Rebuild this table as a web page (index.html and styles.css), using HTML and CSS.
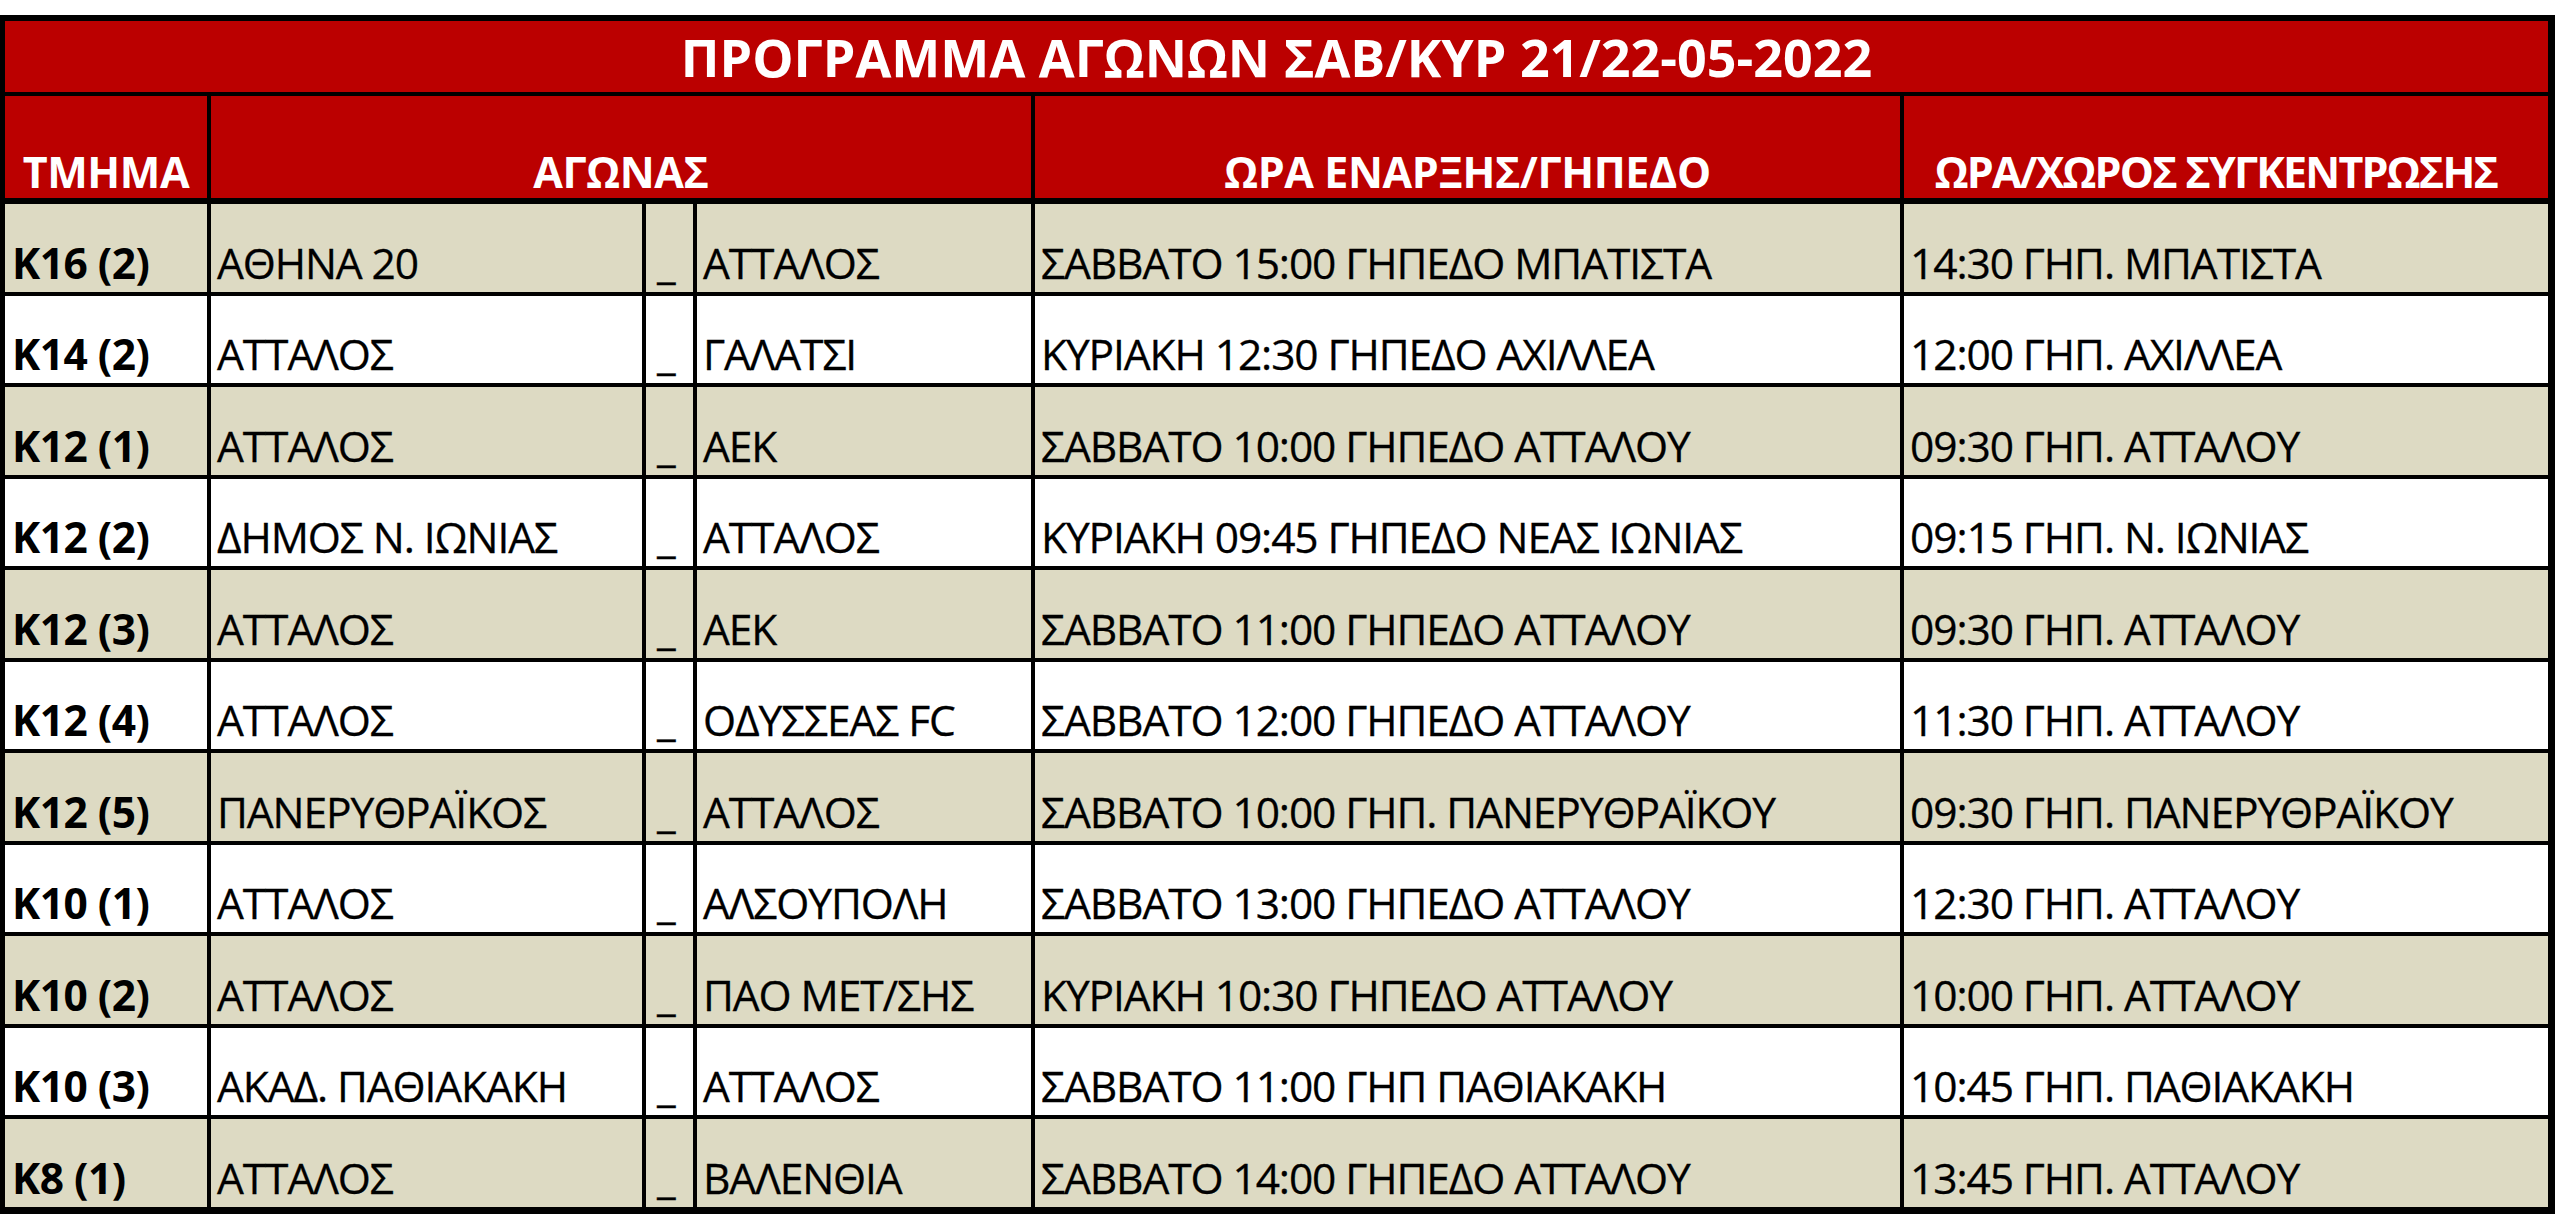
FILE: index.html
```html
<!DOCTYPE html>
<html lang="el">
<head>
<meta charset="utf-8">
<title>ΠΡΟΓΡΑΜΜΑ ΑΓΩΝΩΝ</title>
<link rel="stylesheet" href="styles.css">
</head>
<body>
<div class="sheet">
  <div class="c title">ΠΡΟΓΡΑΜΜΑ ΑΓΩΝΩΝ ΣΑΒ/ΚΥΡ 21/22-05-2022</div>

  <div class="c head">ΤΜΗΜΑ</div>
  <div class="c head span3">ΑΓΩΝΑΣ</div>
  <div class="c head">ΩΡΑ ΕΝΑΡΞΗΣ/ΓΗΠΕΔΟ</div>
  <div class="c head last tight">ΩΡΑ/ΧΩΡΟΣ ΣΥΓΚΕΝΤΡΩΣΗΣ</div>

  <div class="row tan"><div class="c grp">Κ16 (2)</div><div class="c">ΑΘΗΝΑ 20</div><div class="c sep">_</div><div class="c">ΑΤΤΑΛΟΣ</div><div class="c">ΣΑΒΒΑΤΟ 15:00 ΓΗΠΕΔΟ ΜΠΑΤΙΣΤΑ</div><div class="c last">14:30 ΓΗΠ. ΜΠΑΤΙΣΤΑ</div></div>
  <div class="row"><div class="c grp">Κ14 (2)</div><div class="c">ΑΤΤΑΛΟΣ</div><div class="c sep">_</div><div class="c">ΓΑΛΑΤΣΙ</div><div class="c">ΚΥΡΙΑΚΗ 12:30 ΓΗΠΕΔΟ ΑΧΙΛΛΕΑ</div><div class="c last">12:00 ΓΗΠ. ΑΧΙΛΛΕΑ</div></div>
  <div class="row tan"><div class="c grp">Κ12 (1)</div><div class="c">ΑΤΤΑΛΟΣ</div><div class="c sep">_</div><div class="c">ΑΕΚ</div><div class="c">ΣΑΒΒΑΤΟ 10:00 ΓΗΠΕΔΟ ΑΤΤΑΛΟΥ</div><div class="c last">09:30 ΓΗΠ. ΑΤΤΑΛΟΥ</div></div>
  <div class="row"><div class="c grp">Κ12 (2)</div><div class="c">ΔΗΜΟΣ Ν. ΙΩΝΙΑΣ</div><div class="c sep">_</div><div class="c">ΑΤΤΑΛΟΣ</div><div class="c">ΚΥΡΙΑΚΗ 09:45 ΓΗΠΕΔΟ ΝΕΑΣ ΙΩΝΙΑΣ</div><div class="c last">09:15 ΓΗΠ. Ν. ΙΩΝΙΑΣ</div></div>
  <div class="row tan"><div class="c grp">Κ12 (3)</div><div class="c">ΑΤΤΑΛΟΣ</div><div class="c sep">_</div><div class="c">ΑΕΚ</div><div class="c">ΣΑΒΒΑΤΟ 11:00 ΓΗΠΕΔΟ ΑΤΤΑΛΟΥ</div><div class="c last">09:30 ΓΗΠ. ΑΤΤΑΛΟΥ</div></div>
  <div class="row"><div class="c grp">Κ12 (4)</div><div class="c">ΑΤΤΑΛΟΣ</div><div class="c sep">_</div><div class="c">ΟΔΥΣΣΕΑΣ FC</div><div class="c">ΣΑΒΒΑΤΟ 12:00 ΓΗΠΕΔΟ ΑΤΤΑΛΟΥ</div><div class="c last">11:30 ΓΗΠ. ΑΤΤΑΛΟΥ</div></div>
  <div class="row tan"><div class="c grp">Κ12 (5)</div><div class="c">ΠΑΝΕΡΥΘΡΑΪΚΟΣ</div><div class="c sep">_</div><div class="c">ΑΤΤΑΛΟΣ</div><div class="c">ΣΑΒΒΑΤΟ 10:00 ΓΗΠ. ΠΑΝΕΡΥΘΡΑΪΚΟΥ</div><div class="c last">09:30 ΓΗΠ. ΠΑΝΕΡΥΘΡΑΪΚΟΥ</div></div>
  <div class="row"><div class="c grp">Κ10 (1)</div><div class="c">ΑΤΤΑΛΟΣ</div><div class="c sep">_</div><div class="c">ΑΛΣΟΥΠΟΛΗ</div><div class="c">ΣΑΒΒΑΤΟ 13:00 ΓΗΠΕΔΟ ΑΤΤΑΛΟΥ</div><div class="c last">12:30 ΓΗΠ. ΑΤΤΑΛΟΥ</div></div>
  <div class="row tan"><div class="c grp">Κ10 (2)</div><div class="c">ΑΤΤΑΛΟΣ</div><div class="c sep">_</div><div class="c">ΠΑΟ ΜΕΤ/ΣΗΣ</div><div class="c">ΚΥΡΙΑΚΗ 10:30 ΓΗΠΕΔΟ ΑΤΤΑΛΟΥ</div><div class="c last">10:00 ΓΗΠ. ΑΤΤΑΛΟΥ</div></div>
  <div class="row"><div class="c grp">Κ10 (3)</div><div class="c">ΑΚΑΔ. ΠΑΘΙΑΚΑΚΗ</div><div class="c sep">_</div><div class="c">ΑΤΤΑΛΟΣ</div><div class="c">ΣΑΒΒΑΤΟ 11:00 ΓΗΠ ΠΑΘΙΑΚΑΚΗ</div><div class="c last">10:45 ΓΗΠ. ΠΑΘΙΑΚΑΚΗ</div></div>
  <div class="row tan end"><div class="c grp">Κ8 (1)</div><div class="c">ΑΤΤΑΛΟΣ</div><div class="c sep">_</div><div class="c">ΒΑΛΕΝΘΙΑ</div><div class="c">ΣΑΒΒΑΤΟ 14:00 ΓΗΠΕΔΟ ΑΤΤΑΛΟΥ</div><div class="c last">13:45 ΓΗΠ. ΑΤΤΑΛΟΥ</div></div>
</div>
</body>
</html>
```

FILE: styles.css
```css
html, body {
  margin: 0;
  padding: 0;
  background: #ffffff;
}

body {
  padding-top: 15px;
  font-family: "Open Sans", "Noto Sans", "DejaVu Sans", sans-serif;
  color: #000000;
}

.sheet {
  display: grid;
  grid-template-columns: 206px 435px 51px 338px 869px 644px;
  grid-template-rows: 75px 108px repeat(10, 91.5px) 87.5px;
  width: max-content;
  border: 5px solid #000000;
  border-top-width: 6px;
  border-right-width: 7px;
  border-bottom-width: 7px;
  background: #ffffff;
}

.row {
  display: contents;
}

.c {
  box-sizing: border-box;
  display: flex;
  align-items: flex-end;
  min-width: 0;
  overflow: hidden;
  white-space: nowrap;
  border-right: 4px solid #000000;
  border-bottom: 4px solid #000000;
  padding: 0 6px 4px 6px;
  font-size: 42.5px;
  letter-spacing: -1.1px;
  line-height: 1.2;
  -webkit-text-stroke: 0.3px #000000;
}

.row.tan > .c {
  background: #dddac3;
}

.row.end > .c {
  border-bottom: 0;
}

.c.last {
  border-right: 0;
}

.c.grp {
  font-weight: 700;
  padding-left: 7px;
  letter-spacing: -0.5px;
  -webkit-text-stroke: 0;
}

.c.sep {
  padding-left: 11px;
  padding-right: 0;
  letter-spacing: 0;
}

.title {
  grid-column: 1 / -1;
  justify-content: center;
  align-items: center;
  border-right: 0;
  background: #bb0000;
  color: #ffffff;
  font-weight: 700;
  font-size: 52px;
  letter-spacing: 0;
  padding: 2px 0 0 0;
  -webkit-text-stroke: 0;
}

.head {
  justify-content: center;
  background: #bb0000;
  color: #ffffff;
  font-weight: 700;
  font-size: 43px;
  letter-spacing: -0.4px;
  border-bottom-width: 6px;
  padding: 0;
  -webkit-text-stroke: 0;
}

.head.tight {
  letter-spacing: -1.8px;
  padding-right: 20px;
}

.head.span3 {
  grid-column: span 3;
}
```
